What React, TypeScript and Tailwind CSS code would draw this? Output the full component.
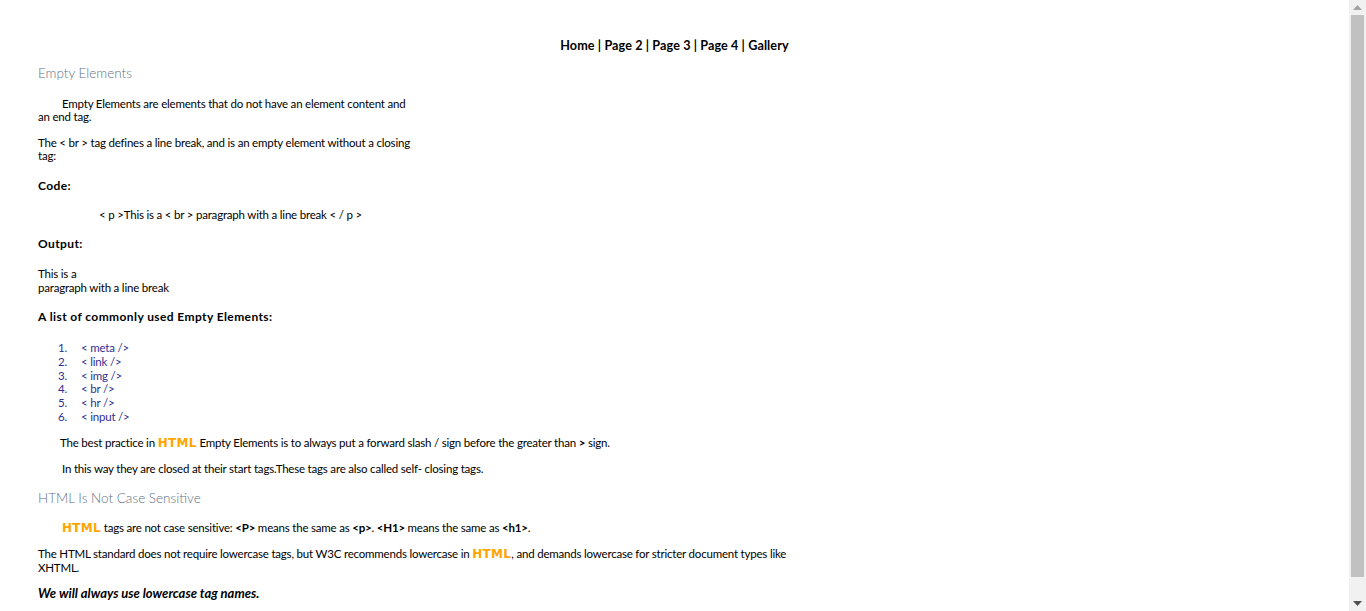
import React from "react";

const body = "font-['Lato','Open_Sans',sans-serif]";
const txt = "text-[11.5px] tracking-[-0.2px]";
const lbl = "text-[12px] font-bold leading-[16px] tracking-[0.4px]";
const orange = "font-['DejaVu_Sans',sans-serif] font-bold text-[#ffa500] text-[12px] tracking-[0.3px]";

function Scrollbar() {
  return (
    <div className="flex h-full w-[17px] shrink-0 flex-col items-center bg-[#f1f1f1]">
      <div className="flex h-[15px] w-full items-center justify-center">
        <svg width="9" height="5" viewBox="0 0 9 5">
          <polygon points="0,5 9,5 4.5,0" fill="#a3a3a3" />
        </svg>
      </div>
      <div className="w-[13px] flex-1 bg-[#c1c1c1]" />
      <div className="flex h-[34px] w-full items-end justify-center pb-[5px]">
        <svg width="9" height="5" viewBox="0 0 9 5">
          <polygon points="0,0 9,0 4.5,5" fill="#505050" />
        </svg>
      </div>
    </div>
  );
}

export default function App() {
  return (
    <div className={`flex h-[611px] w-full overflow-hidden bg-white text-black ${body}`}>
      <div className="flex-1 px-[38px] pt-[38px]">
        <div className="h-[16px] text-center text-[12.6px] font-bold leading-[16px] tracking-[0.1px]">
          Home | Page 2 | Page 3 | Page 4 | Gallery
        </div>

        <h2 className="mt-[10px] h-[18px] text-[13.5px] font-light leading-[18px] text-[#637085]">
          Empty Elements
        </h2>

        <p className={`mt-[15px] indent-[24px] ${txt} leading-[13px]`}>
          Empty Elements are elements that do not have an element content and
          <br />
          an end tag.
        </p>

        <p className={`mt-[13px] ${txt} leading-[13px]`}>
          The &lt; br &gt; tag defines a line break, and is an empty element without a closing
          <br />
          tag:
        </p>

        <p className={`mt-[16px] ${lbl}`}>Code:</p>

        <p className={`mt-[14px] pl-[61px] ${txt} leading-[13px]`}>
          &lt; p &gt;This is a &lt; br &gt; paragraph with a line break &lt; / p &gt;
        </p>

        <p className={`mt-[15px] ${lbl}`}>Output:</p>

        <p className={`mt-[15px] ${txt} leading-[14px]`}>
          This is a
          <br />
          paragraph with a line break
        </p>

        <p className={`mt-[14px] ${lbl}`}>A list of commonly used Empty Elements:</p>

        <ol className={`mt-[16px] ${txt} leading-[13.8px] text-[#303090]`}>
          {["< meta />", "< link />", "< img />", "< br />", "< hr />", "< input />"].map((t, i) => (
            <li key={t} className="flex">
              <span className="w-[43px] pr-[14px] text-right">{i + 1}.</span>
              <span>{t}</span>
            </li>
          ))}
        </ol>

        <p className={`mt-[12px] pl-[22px] ${txt} leading-[14px]`}>
          The best practice in <span className={orange}>HTML</span> Empty Elements is to always put a forward
          slash / sign before the greater than <b>&gt;</b> sign.
        </p>

        <p className={`mt-[12px] pl-[24px] ${txt} leading-[14px]`}>
          In this way they are closed at their start tags.These tags are also called self- closing tags.
        </p>

        <h2 className="mt-[13px] h-[18px] text-[13.5px] font-light leading-[18px] text-[#637085]">
          HTML Is Not Case Sensitive
        </h2>

        <p className={`mt-[14px] pl-[24px] ${txt} leading-[14px]`}>
          <span className={orange}>HTML</span> tags are not case sensitive: <b>&lt;P&gt;</b> means the same as{" "}
          <b>&lt;p&gt;</b>. <b>&lt;H1&gt;</b> means the same as <b>&lt;h1&gt;</b>.
        </p>

        <p className={`mt-[12.5px] ${txt} leading-[13px]`}>
          The HTML standard does not require lowercase tags, but W3C recommends lowercase in{" "}
          <span className={orange}>HTML</span>, and demands lowercase for stricter document types like
          <br />
          XHTML.
        </p>

        <p className="mt-[11px] text-[13px] font-bold italic leading-[16px]">
          We will always use lowercase tag names.
        </p>
      </div>
      <Scrollbar />
    </div>
  );
}
